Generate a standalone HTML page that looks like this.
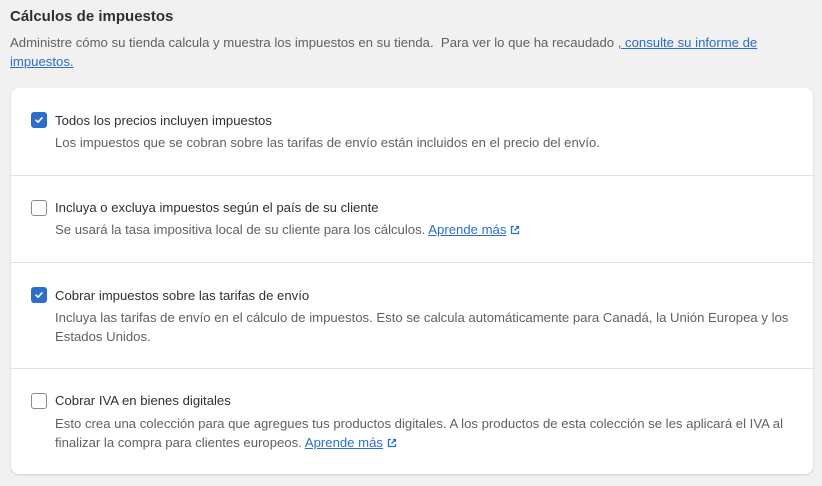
<!DOCTYPE html>
<html><head><meta charset="utf-8"><style>
body{margin:0;width:822px;height:486px;background:#f1f1f1;font-family:"Liberation Sans",Arial,sans-serif;overflow:hidden}
h1{position:absolute;left:10px;top:8px;margin:0;font-size:15px;font-weight:bold;color:#303030}
.intro{position:absolute;left:10px;top:33px;width:790px;font-size:13.15px;line-height:19px;color:#616161}
a{color:#2c6ecb;text-decoration:underline}
.card{position:absolute;left:11px;top:88px;width:802px;height:386px;background:#fff;border-radius:8px;box-shadow:0 1px 2px rgba(0,0,0,.15)}
.row{position:absolute;left:0;width:802px;border-top:1px solid #e3e3e3}
.row:first-child{border-top:none}
.cb{position:absolute;left:20px;width:16px;height:16px;border:1.5px solid #8a8a8a;border-radius:3px;box-sizing:border-box;background:#fff}
.cb.on{background:#2c6ecb;border-color:#2c6ecb}
.cb.on svg{position:absolute;left:1.5px;top:1.5px}
.t{position:absolute;left:44px;font-size:13.15px;color:#303030;line-height:19px}
.d{position:absolute;left:44px;width:750px;font-size:13.15px;color:#616161;line-height:19px}
.ext{display:inline-block;vertical-align:-1px;margin-left:4px}
</style></head><body>
<h1>Cálculos de impuestos</h1>
<div class="intro">Administre cómo su tienda calcula y muestra los impuestos en su tienda.&nbsp; Para ver lo que ha recaudado <a>, consulte su informe de impuestos.</a></div>
<div class="card">
 <div class="row" style="top:0;height:87px">
  <div class="cb on" style="top:24px"><svg width="10" height="10" viewBox="0 0 10 10"><path d="M2 5.2l2 2 4-4.4" stroke="#fff" stroke-width="1.6" fill="none" stroke-linecap="round" stroke-linejoin="round"/></svg></div>
  <div class="t" style="top:23px">Todos los precios incluyen impuestos</div>
  <div class="d" style="top:45px">Los impuestos que se cobran sobre las tarifas de envío están incluidos en el precio del envío.</div>
 </div>
 <div class="row" style="top:87px;height:87px">
  <div class="cb" style="top:24px"></div>
  <div class="t" style="top:22px">Incluya o excluya impuestos según el país de su cliente</div>
  <div class="d" style="top:44px">Se usará la tasa impositiva local de su cliente para los cálculos. <a>Aprende más</a><svg class="ext" width="10" height="10" viewBox="0 0 10 10"><path d="M4 1.5H1.5v7h7V6M6 1.5h2.5V4M8.5 1.5L4.5 5.5" stroke="#2c6ecb" stroke-width="1.3" fill="none"/></svg></div>
 </div>
 <div class="row" style="top:174px;height:105px">
  <div class="cb on" style="top:24px"><svg width="10" height="10" viewBox="0 0 10 10"><path d="M2 5.2l2 2 4-4.4" stroke="#fff" stroke-width="1.6" fill="none" stroke-linecap="round" stroke-linejoin="round"/></svg></div>
  <div class="t" style="top:23px">Cobrar impuestos sobre las tarifas de envío</div>
  <div class="d" style="top:45px">Incluya las tarifas de envío en el cálculo de impuestos. Esto se calcula automáticamente para Canadá, la Unión Europea y los Estados Unidos.</div>
 </div>
 <div class="row" style="top:280px;height:106px">
  <div class="cb" style="top:24px"></div>
  <div class="t" style="top:22px">Cobrar IVA en bienes digitales</div>
  <div class="d" style="top:45px">Esto crea una colección para que agregues tus productos digitales. A los productos de esta colección se les aplicará el IVA al finalizar la compra para clientes europeos. <a>Aprende más</a><svg class="ext" width="10" height="10" viewBox="0 0 10 10"><path d="M4 1.5H1.5v7h7V6M6 1.5h2.5V4M8.5 1.5L4.5 5.5" stroke="#2c6ecb" stroke-width="1.3" fill="none"/></svg></div>
 </div>
</div>
</body></html>
